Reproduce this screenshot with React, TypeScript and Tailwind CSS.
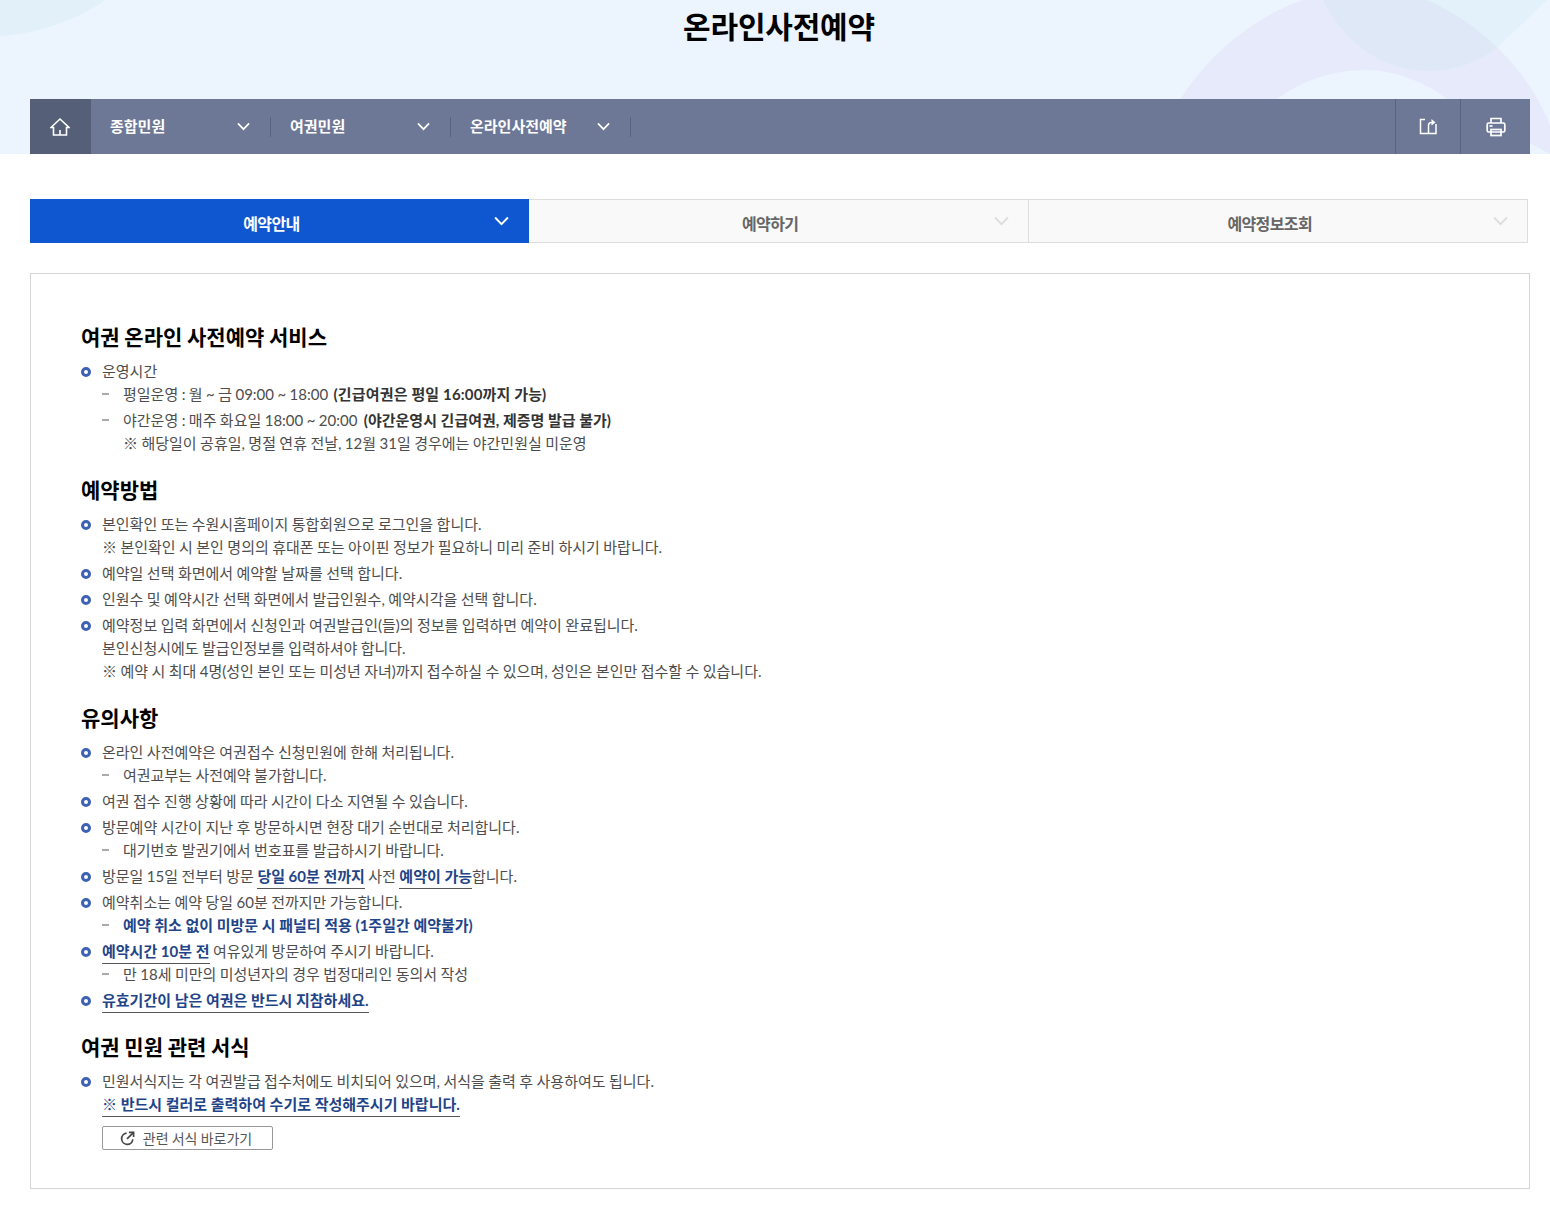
import { ReactNode } from "react";

const Chevron = ({ className }: { className: string }) => (
  <svg viewBox="0 0 14 9" fill="none" stroke="currentColor" className={className}>
    <path d="M1 1.2 7 7.4 13 1.2" strokeWidth="1.8" />
  </svg>
);

const NAV = ["종합민원", "여권민원", "온라인사전예약"];

const TABS = ["예약안내", "예약하기", "예약정보조회"];

function Strong({ children }: { children: ReactNode }) {
  return <b className="font-bold text-[#1f4488] [word-spacing:0]">{children}</b>;
}

function Under({ children }: { children: ReactNode }) {
  return <b className="font-bold text-[#1f4488] [word-spacing:0] border-b border-[#555] pb-[3px]">{children}</b>;
}

function Item({ children }: { children: ReactNode }) {
  return (
    <li className="relative pl-[21px] mb-[3px]">
      <span className="absolute left-0 top-[7px] w-[10px] h-[10px] rounded-full border-[3px] border-[#3d62b4]" />
      {children}
    </li>
  );
}

function Sub({ children }: { children: ReactNode }) {
  return (
    <div className="relative pl-[21px] mb-[3px] last:mb-0">
      <span className="absolute left-0 top-[10px] w-[7px] h-[2px] bg-[#aaa]" />
      {children}
    </div>
  );
}

function Title({ children, className = "" }: { children: ReactNode; className?: string }) {
  return <h3 className={`text-[21px] leading-[30px] font-bold text-black tracking-normal mb-[8px] ${className}`}>{children}</h3>;
}

export default function App() {
  return (
    <div className="min-h-[1211px] bg-white font-['Lato','Noto_Sans_CJK_KR',sans-serif] text-[#4d4d4d]">
      <header className="relative h-[154px] bg-[#ecf4fe] overflow-hidden">
        {/* background blobs */}
        <svg className="absolute inset-0 w-full h-[154px]" viewBox="0 0 1550 154" preserveAspectRatio="none">
          <defs>
            <clipPath id="big-arc">
              <path d="M1168 120C1210 40 1290 -12 1370 -12C1440 -12 1520 50 1550 125V154H1168Z" />
            </clipPath>
          </defs>
          <path d="M0 36C40 34 80 18 105 0H0Z" fill="#e2f0fa" />
          <path d="M1168 120C1210 40 1290 -12 1370 -12C1440 -12 1520 50 1550 125V154H1168Z" fill="#e6eafa" />
          <path d="M1277 99C1300 82 1330 70 1365 70C1395 70 1425 82 1447 99L1550 154H1277Z" fill="#ecf4fe" />
          <path d="M1323 0C1345 45 1385 71 1427 71C1460 71 1480 60 1498 47L1547 0Z" fill="#e3f1fb" />
          <path d="M1323 0C1345 45 1385 71 1427 71C1460 71 1480 60 1498 47L1547 0Z" fill="#dfe8f7" clipPath="url(#big-arc)" />
        </svg>
        <h2 className="relative text-center pl-[8px] pt-[4px] text-[30px] leading-[44px] font-bold text-black tracking-[-0.2px]">
          온라인사전예약
        </h2>
        <nav className="absolute left-[30px] right-[20px] top-[99px] h-[55px] bg-[#6d7896] flex items-center text-white">
          <a className="w-[61px] h-full bg-[#555f78] flex items-center justify-center pr-[1px]">
            <svg viewBox="0 0 20 20" fill="none" stroke="white" strokeWidth="1.6" className="w-[20px] h-[20px]">
              <path d="M1 10.5 10 2 19 10.5H16.5V18H3.5V10.5Z" />
              <path d="M10 18V13" />
            </svg>
          </a>
          {NAV.map((label) => (
            <div key={label} className="w-[180px] h-[20px] flex items-center justify-between pl-[19px] pr-[20px] border-r border-[#596380]">
              <span className="text-[15px] font-bold">{label}</span>
              <Chevron className="w-[13px] h-[9px]" />
            </div>
          ))}
          <div className="ml-auto flex h-full">
            <a className="w-[65px] flex items-center justify-center border-l border-[#596380]">
              <svg viewBox="0 0 18 18" fill="none" stroke="white" strokeWidth="1.5" className="w-[18px] h-[18px]">
                <path d="M6 1.5H1.5V15.5H17V6" />
                <path d="M9.5 15V7.5Q9.5 4.5 12.5 4.5H14" />
                <path d="M12.5 1 16.5 4.5 12.5 7.5Z" fill="white" stroke="none" />
              </svg>
            </a>
            <a className="w-[70px] flex items-center justify-center border-l border-[#596380]">
              <svg viewBox="0 0 20 20" fill="none" stroke="white" strokeWidth="1.7" className="w-[20px] h-[20px]">
                <path d="M5 6V1.5H15V6" />
                <rect x="1.2" y="6" width="17.6" height="9" rx="1.5" />
                <rect x="5" y="12.5" width="10" height="6" />
                <path d="M3.5 9H6.5" />
              </svg>
            </a>
          </div>
        </nav>
      </header>

      <main className="px-[30px] pt-[45px]">
        <ul className="flex w-[1498px] h-[44px]">
          {TABS.map((tab, i) => (
            <li
              key={tab}
              className={
                i === 0
                  ? "relative w-[499px] bg-[#0f57d0] text-white flex items-center justify-center pr-[16px]"
                  : "relative w-[499.5px] bg-[#f9f9f9] text-[#666] border border-[#ddd] border-l-0 flex items-center justify-center pr-[16px]"
              }
            >
              <span className="text-[16px] font-bold tracking-[-0.6px] pt-[5px]">{tab}</span>
              <Chevron
                className={
                  i === 0
                    ? "absolute right-[20px] top-[17px] w-[15px] h-[10px]"
                    : "absolute right-[19px] top-[16px] w-[15px] h-[10px] text-[#ddd]"
                }
              />
            </li>
          ))}
        </ul>

        <section className="mt-[30px] w-[1500px] h-[916px] border border-[#d5d5d5] px-[50px] pt-[48px] text-[15px] leading-[23px] [word-spacing:-0.4px]">
          <Title>여권 온라인 사전예약 서비스</Title>
          <ul>
            <Item>
              운영시간
              <Sub>
                평일운영 : 월 ~ 금 09:00 ~ 18:00 <b className="ml-[2px] font-bold text-[#333] tracking-[0.15px] [word-spacing:0]">(긴급여권은 평일 16:00까지 가능)</b>
              </Sub>
              <Sub>
                야간운영 : 매주 화요일 18:00 ~ 20:00 <b className="ml-[3px] font-bold text-[#333] [word-spacing:0]">(야간운영시 긴급여권, 제증명 발급 불가)</b>
                <br />※ 해당일이 공휴일, 명절 연휴 전날, 12월 31일 경우에는 야간민원실 미운영
              </Sub>
            </Item>
          </ul>

          <Title className="mt-[20px]">예약방법</Title>
          <ul>
            <Item>
              본인확인 또는 수원시홈페이지 통합회원으로 로그인을 합니다.
              <br />※ 본인확인 시 본인 명의의 휴대폰 또는 아이핀 정보가 필요하니 미리 준비 하시기 바랍니다.
            </Item>
            <Item>예약일 선택 화면에서 예약할 날짜를 선택 합니다.</Item>
            <Item>인원수 및 예약시간 선택 화면에서 발급인원수, 예약시각을 선택 합니다.</Item>
            <Item>
              예약정보 입력 화면에서 신청인과 여권발급인(들)의 정보를 입력하면 예약이 완료됩니다.
              <br />본인신청시에도 발급인정보를 입력하셔야 합니다.
              <br />※ 예약 시 최대 4명(성인 본인 또는 미성년 자녀)까지 접수하실 수 있으며, 성인은 본인만 접수할 수 있습니다.
            </Item>
          </ul>

          <Title className="mt-[20px]">유의사항</Title>
          <ul>
            <Item>
              온라인 사전예약은 여권접수 신청민원에 한해 처리됩니다.
              <Sub>여권교부는 사전예약 불가합니다.</Sub>
            </Item>
            <Item>여권 접수 진행 상황에 따라 시간이 다소 지연될 수 있습니다.</Item>
            <Item>
              방문예약 시간이 지난 후 방문하시면 현장 대기 순번대로 처리합니다.
              <Sub>대기번호 발권기에서 번호표를 발급하시기 바랍니다.</Sub>
            </Item>
            <Item>
              방문일 15일 전부터 방문 <Under>당일 60분 전까지</Under> 사전 <Under>예약이 가능</Under>합니다.
            </Item>
            <Item>
              예약취소는 예약 당일 60분 전까지만 가능합니다.
              <Sub>
                <Strong>예약 취소 없이 미방문 시 패널티 적용 (1주일간 예약불가)</Strong>
              </Sub>
            </Item>
            <Item>
              <Under>예약시간 10분 전</Under> 여유있게 방문하여 주시기 바랍니다.
              <Sub>만 18세 미만의 미성년자의 경우 법정대리인 동의서 작성</Sub>
            </Item>
            <Item>
              <Under>유효기간이 남은 여권은 반드시 지참하세요.</Under>
            </Item>
          </ul>

          <Title className="mt-[20px]">여권 민원 관련 서식</Title>
          <ul>
            <Item>
              민원서식지는 각 여권발급 접수처에도 비치되어 있으며, 서식을 출력 후 사용하여도 됩니다.
              <br />
              <Under>※ 반드시 컬러로 출력하여 수기로 작성해주시기 바랍니다.</Under>
              <a className="mt-[10px] flex items-center justify-center gap-[8px] w-[171px] h-[24px] border border-[#999] rounded-[2px] pr-[3px] text-[14px] text-[#555]">
                <svg viewBox="0 0 16 16" fill="none" stroke="#444" strokeWidth="1.8" className="w-[15px] h-[15px]">
                  <path d="M7 2.3A6 6 0 1 0 13.7 9" />
                  <path d="M7.5 8.5 14 2" />
                  <path d="M9.5 1.5H14.5V6.5" />
                </svg>
                관련 서식 바로가기
              </a>
            </Item>
          </ul>
        </section>
      </main>
    </div>
  );
}
